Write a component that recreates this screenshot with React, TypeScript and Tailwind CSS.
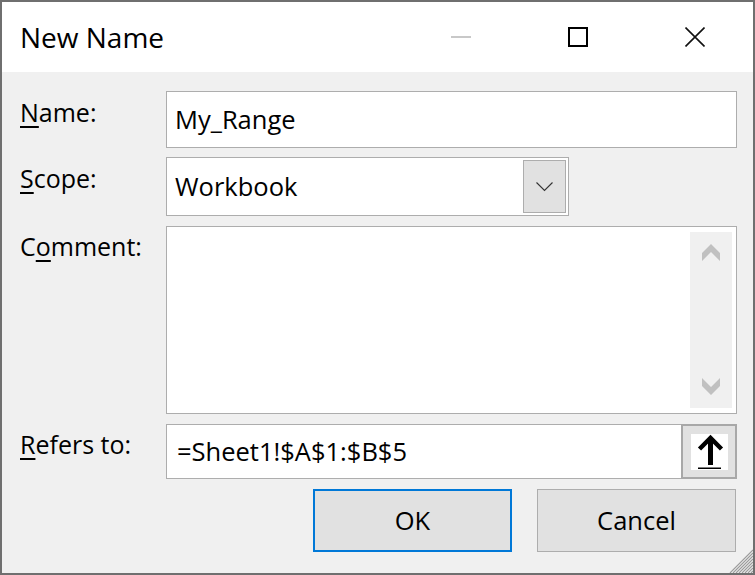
import React from "react";

const font = { fontFamily: '"Open Sans", "Noto Sans", sans-serif' };

const Label = ({ k, rest, pre = "" }: { k: string; rest: string; pre?: string }) => (
  <div className="w-[146px] shrink-0 text-[25px] leading-[34px] text-black">
    {pre}
    <span className="underline decoration-[1.5px] underline-offset-[4px]">{k}</span>
    {rest}
  </div>
);

export default function App() {
  return (
    <div style={font} className="w-[755px] h-[575px] bg-white">
      <div className="relative w-[755px] h-[575px] border-2 border-[#6f6f6f] bg-[#f0f0f0] flex flex-col">
        {/* title bar */}
        <div className="h-[70px] bg-white flex items-center shrink-0">
          <div className="pl-[18px] text-[28px] text-black leading-none pb-[1px]">New Name</div>
          <div className="flex-1" />
          <div className="w-[117px] h-full flex items-center justify-center">
            <div className="w-[20px] h-[2px] bg-[#c8c8c8]" />
          </div>
          <div className="w-[117px] h-full flex items-center justify-center">
            <div className="w-[20px] h-[20px] border-2 border-black" />
          </div>
          <div className="w-[117px] h-full flex items-center justify-center">
            <svg width="20" height="20" viewBox="0 0 20 20">
              <path d="M0.5 0.5 L19.5 19.5 M19.5 0.5 L0.5 19.5" stroke="#111" strokeWidth="1.6" fill="none" />
            </svg>
          </div>
        </div>

        {/* form */}
        <div className="flex flex-col pl-[18px] pr-[16px]">
          <div className="flex mt-[19px] h-[57px]">
            <div className="pt-[4px]">
              <Label k="N" rest="ame:" />
            </div>
            <div className="flex-1 bg-white border border-[#adadad] flex items-center pl-[8px] text-[25.5px] text-black">
              My_Range
            </div>
          </div>

          <div className="flex mt-[9px] h-[59px]">
            <div className="pt-[4px]">
              <Label k="S" rest="cope:" />
            </div>
            <div className="w-[403px] bg-white border border-[#adadad] flex items-center">
              <div className="flex-1 pl-[8px] text-[25.5px] text-black">Workbook</div>
              <div className="w-[43px] h-[53px] mr-[2px] bg-[#e1e1e1] border border-[#adadad] flex items-center justify-center">
                <svg width="17" height="10" viewBox="0 0 17 10">
                  <path d="M0.5 0.5 L8.5 8.5 L16.5 0.5" stroke="#333" strokeWidth="1.1" fill="none" />
                </svg>
              </div>
            </div>
          </div>

          <div className="flex mt-[10px] h-[188px]">
            <div className="pt-[3px]">
              <Label pre="C" k="o" rest="mment:" />
            </div>
            <div className="flex-1 bg-white border border-[#adadad] flex justify-end p-[5px] pr-[4px]">
              <div className="w-[42px] bg-[#f0f0f0] flex flex-col items-center justify-between pt-[12px] pb-[13px]">
                <svg width="18" height="17" viewBox="0 0 18 17">
                  <path d="M0 9 L9 0 L18 9 L18 17 L9 8 L0 17 Z" fill="#c0c0c0" />
                </svg>
                <svg width="18" height="17" viewBox="0 0 18 17">
                  <path d="M0 0 L9 9 L18 0 L18 8 L9 17 L0 8 Z" fill="#c0c0c0" />
                </svg>
              </div>
            </div>
          </div>

          <div className="flex mt-[10px] h-[55px]">
            <div className="pt-[3px]">
              <Label k="R" rest="efers to:" />
            </div>
            <div className="flex-1 bg-white border border-[#adadad] flex items-center">
              <div className="flex-1 pl-[10px] text-[25.5px] text-black">=Sheet1!$A$1:$B$5</div>
              <div className="w-[56px] h-[55px] -mr-[1px] bg-[#e1e1e1] border-2 border-[#a8a8a8] flex items-center justify-center">
                <svg width="37" height="36" viewBox="0 0 37 36" className="bg-white">
                  <path d="M19.5 5 L19.5 31" stroke="#000" strokeWidth="5" fill="none" />
                  <path d="M8.5 15 L19.5 4 L30.5 15" stroke="#000" strokeWidth="4.5" fill="none" />
                  <rect x="7" y="33.5" width="23" height="1.5" fill="#000" />
                </svg>
              </div>
            </div>
          </div>

          <div className="flex justify-end gap-[25px] mt-[10px] pr-[1px]">
            <button className="w-[199px] h-[63px] bg-[#e1e1e1] border-2 border-[#0078d7] text-[25.5px] text-black">
              OK
            </button>
            <button className="w-[199px] h-[63px] bg-[#e1e1e1] border border-[#adadad] text-[25.5px] text-black">
              Cancel
            </button>
          </div>
        </div>

        {/* resize grip */}
        <svg width="24" height="24" viewBox="0 0 24 24" className="absolute right-0 bottom-0">
          <path
            d="M24 1 L1 24 M24 4 L4 24 M24 7 L7 24 M24 10 L10 24 M24 13 L13 24 M24 16 L16 24 M24 19 L19 24 M24 22 L22 24"
            stroke="#9a9a9a"
            strokeWidth="1.1"
            fill="none"
          />
        </svg>
      </div>
    </div>
  );
}
